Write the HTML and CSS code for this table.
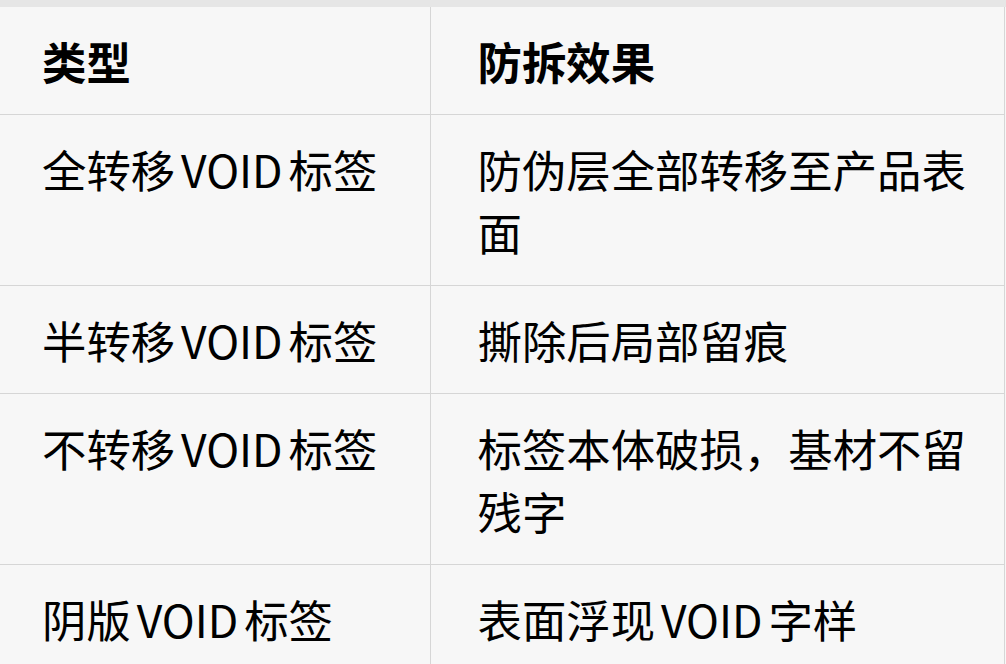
FILE: index.html
```html
<!DOCTYPE html>
<html lang="zh-CN">
<head>
<meta charset="utf-8">
<title>VOID 标签</title>
<link rel="stylesheet" href="styles.css">
</head>
<body>
<div class="page">
  <div class="strip"></div>
  <table class="spec">
    <colgroup><col class="c1"><col class="c2"></colgroup>
    <thead>
      <tr><th>类型</th><th>防拆效果</th></tr>
    </thead>
    <tbody>
      <tr><td>全转移 VOID 标签</td><td>防伪层全部转移至产品表面</td></tr>
      <tr><td>半转移 VOID 标签</td><td>撕除后局部留痕</td></tr>
      <tr><td>不转移 VOID 标签</td><td>标签本体破损，基材不留残字</td></tr>
      <tr><td>阴版 VOID 标签</td><td>表面浮现 VOID 字样</td></tr>
    </tbody>
  </table>
</div>
</body>
</html>
```

FILE: styles.css
```css
html, body {
  margin: 0;
  padding: 0;
  background: #f7f7f7;
}
.page {
  width: 1006px;
  height: 664px;
  overflow: hidden;
  background: #f7f7f7;
}
.strip {
  height: 7px;
  background: #e6e6e6;
}
.spec {
  border-collapse: collapse;
  table-layout: fixed;
  width: 1004px;
  font-family: "Noto Sans CJK SC", "Noto Sans", sans-serif;
  font-size: 44.4px;
  line-height: 63px;
  word-spacing: -4px;
  color: #000;
  background: #f7f7f7;
  border-right: 1px solid #d6d6d6;
}
.c1 { width: 430px; }
.c2 { width: 574px; }
.spec th, .spec td {
  text-align: left;
  vertical-align: top;
  padding: 22px 30px 22px 42px;
  border-bottom: 1px solid #d6d6d6;
}
.spec td { font-weight: 400; }
.spec th { font-weight: 700; }
.spec th:first-child, .spec td:first-child {
  border-right: 1px solid #d6d6d6;
}
.spec th + th, .spec td + td {
  padding-left: 47px;
}
```
